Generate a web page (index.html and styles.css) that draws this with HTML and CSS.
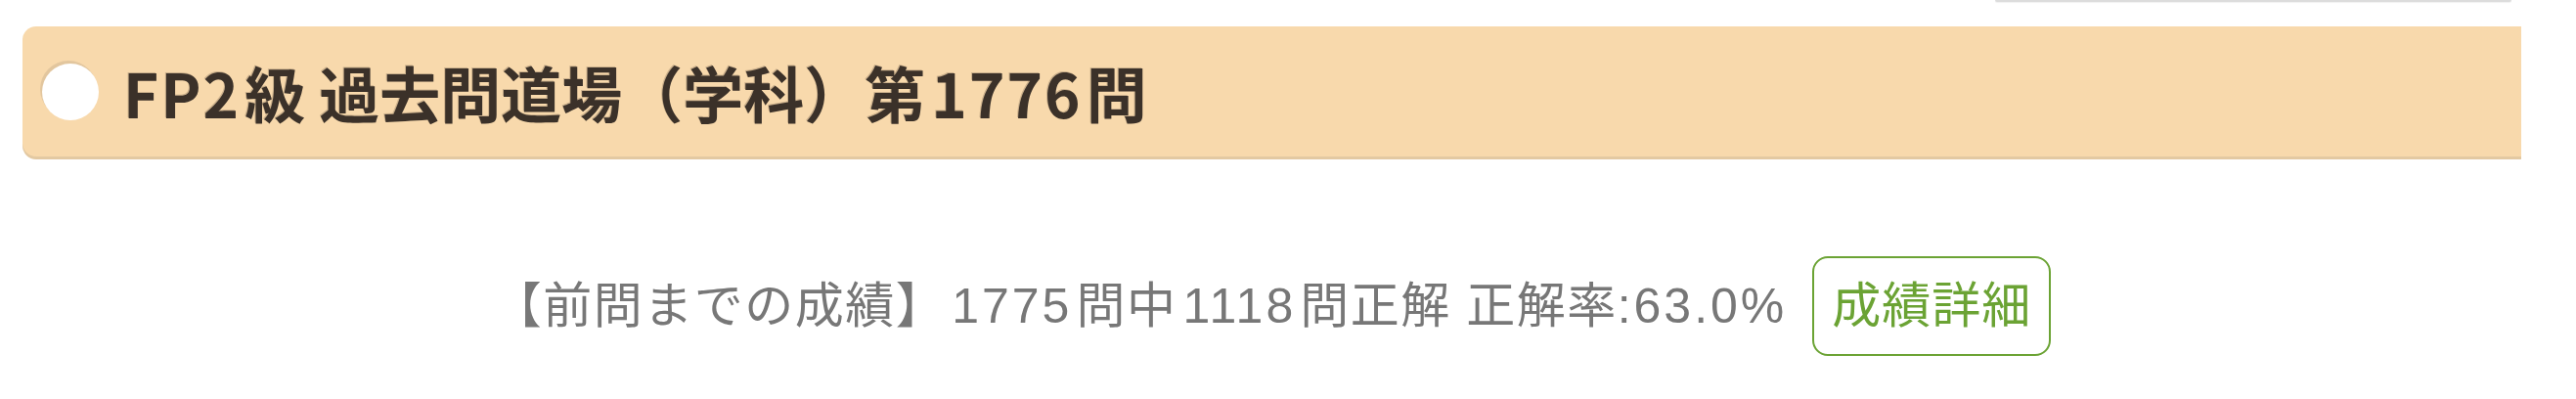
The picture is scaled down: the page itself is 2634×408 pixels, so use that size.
FILE: index.html
```html
<!DOCTYPE html>
<html lang="ja">
<head>
<meta charset="utf-8">
<title>FP2級 過去問道場（学科）第1776問</title>
<link rel="stylesheet" href="styles.css">
</head>
<body>
<div class="page">
  <div class="topbar"><div class="topbar-edge"></div></div>
  <h1 class="banner">
    <span class="hole"></span>
    <span class="title"><span class="lat lat-start">FP2</span>級 過去問道場（学科）第<span class="lat">1776</span>問</span>
  </h1>
  <div class="stats">
    <span class="stats-text">【前問までの成績】<span class="num">1775</span>問中<span class="num">1118</span>問正解 正解率<span class="num num-end">:63.0%</span></span>
    <a class="detail-btn" href="#">成績詳細</a>
  </div>
</div>
</body>
</html>
```
FILE: styles.css
```css
html, body {
  margin: 0;
  padding: 0;
  background: #ffffff;
}

.page {
  padding: 0 56px 0 23px;
  font-family: "Liberation Sans", "Noto Sans CJK JP", sans-serif;
}

.topbar {
  display: flex;
  justify-content: flex-end;
  padding-right: 10px;
}

.topbar-edge {
  width: 528px;
  height: 2px;
  background: #dcdcdc;
  border-radius: 0 0 4px 4px;
  box-shadow: 0 1px 1px rgba(0, 0, 0, 0.06);
}

.banner {
  margin: 25px 0 0 0;
  height: 133px;
  box-sizing: border-box;
  display: flex;
  align-items: center;
  padding-left: 20px;
  background: #f8d9ac;
  border-radius: 14px 0 0 14px;
  box-shadow: 0 3px 0 #e3c9a2;
}

.hole {
  flex: none;
  width: 58px;
  height: 58px;
  border-radius: 50%;
  background: #ffffff;
  box-shadow: -2px -3px 0 #e2c69e;
  margin-right: 25px;
}

.title {
  font-family: "Noto Sans CJK JP", sans-serif;
  font-weight: 700;
  font-size: 62px;
  line-height: 1;
  color: #3b3129;
  text-shadow: -1px -1px 0 rgba(120, 100, 80, 0.35);
}

.lat {
  letter-spacing: 2px;
  margin: 0 4px 0 6px;
}

.lat-start {
  margin-left: 0;
}

.stats {
  margin-top: 102px;
  display: flex;
  justify-content: center;
  align-items: center;
  gap: 26px;
}

.stats-text {
  font-size: 50px;
  line-height: 1;
  color: #777777;
  letter-spacing: 1.5px;
}

.num {
  letter-spacing: 3px;
  margin: 0 4px 0 6px;
}

.num-end {
  margin: 0;
}

.detail-btn {
  display: block;
  box-sizing: border-box;
  height: 102px;
  padding: 0 18px;
  line-height: 98px;
  border: 2px solid #6ba334;
  border-radius: 16px;
  color: #6ba334;
  font-size: 50px;
  letter-spacing: 1px;
  text-decoration: none;
}
```
